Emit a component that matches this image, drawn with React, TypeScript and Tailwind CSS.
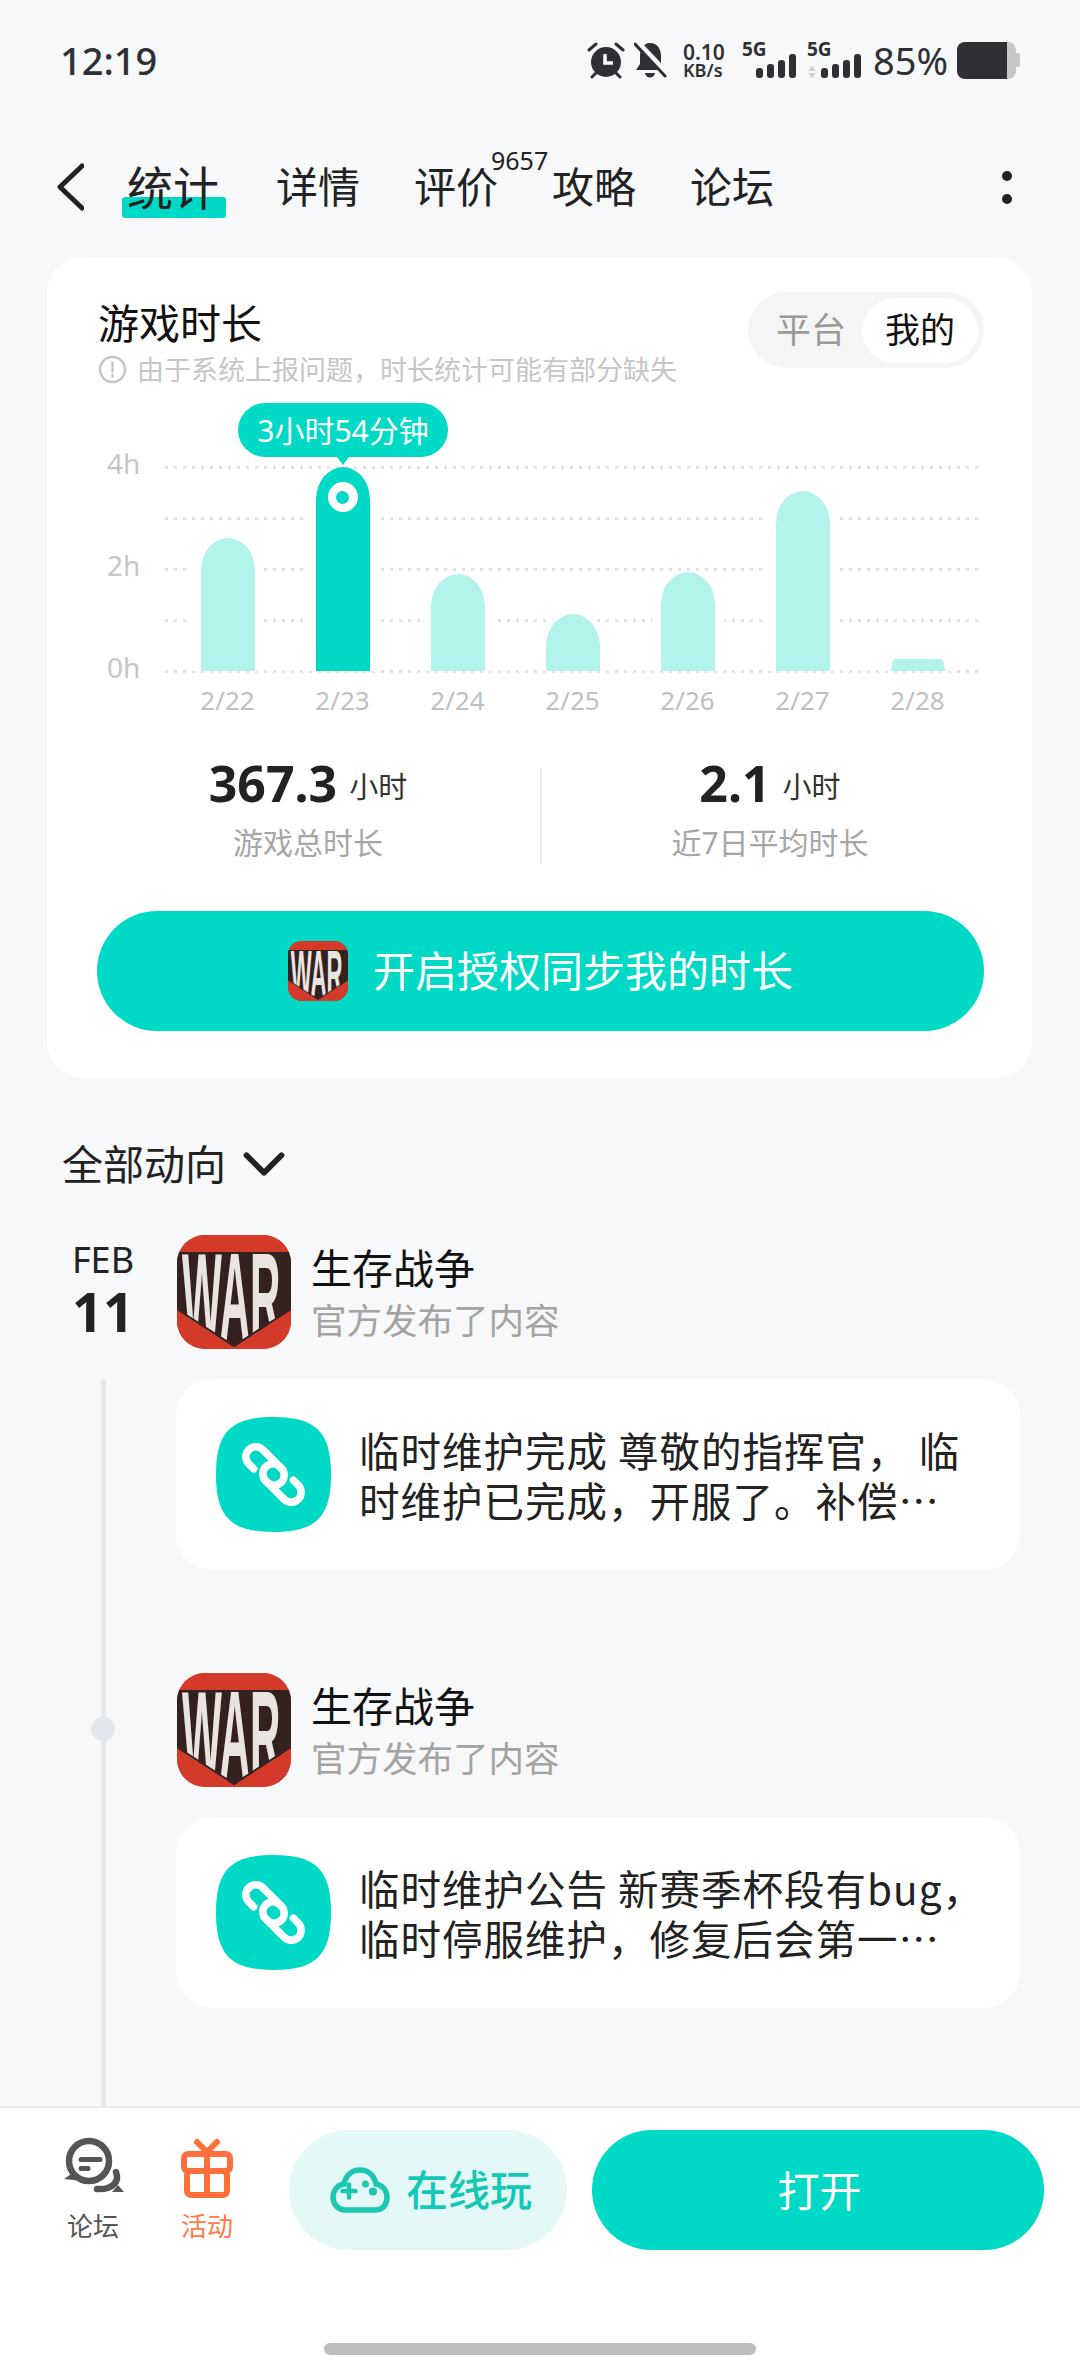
import { ChevronDown } from "lucide-react";

const bars = [
  { label: "2/22", height: 133 },
  { label: "2/23", height: 204, active: true },
  { label: "2/24", height: 97 },
  { label: "2/25", height: 57 },
  { label: "2/26", height: 99 },
  { label: "2/27", height: 180 },
  { label: "2/28", height: 12 },
];

const tabs = ["详情", "评价", "攻略", "论坛"];

function WarLogo({ size, className }: { size: number; className: string }) {
  return (
    <svg width={size} height={size} viewBox="0 0 114 114" className={className}>
      <rect width="114" height="114" fill="#d33a2a" />
      <path d="M0 17H114V73L57 110L0 73Z" fill="#33211f" />
      <text
        transform="translate(5 105) scale(0.88 2.6)"
        fontSize="48"
        fontWeight="700"
        fontFamily="'Liberation Sans', sans-serif"
        fill="#e9e4e0"
      >
        WAR
      </text>
      <path d="M0 0H114V17H0ZM0 75L57 112L114 75V114H0Z" fill="#d33a2a" />
      <path d="M0 74L57 111L114 74" fill="none" stroke="#33211f" strokeWidth="2" />
    </svg>
  );
}

function LinkIcon() {
  return (
    <svg width="115" height="115" viewBox="0 0 115 115" className="shrink-0">
      <path
        d="M57.5 0C100 0 115 15 115 57.5C115 100 100 115 57.5 115C15 115 0 100 0 57.5C0 15 15 0 57.5 0Z"
        fill="#00d9c5"
      />
      <g fill="none" stroke="#fff" strokeWidth="7.5" strokeLinecap="round">
        <path
          transform="translate(49 49) rotate(45)"
          d="M-6 10H-13A10 10 0 0 1 -13 -10H13A10 10 0 0 1 13 10H9"
        />
        <path
          transform="translate(66 66) rotate(225)"
          d="M-6 10H-13A10 10 0 0 1 -13 -10H13A10 10 0 0 1 13 10H9"
        />
      </g>
    </svg>
  );
}

function SignalBlock({ arrows }: { arrows?: boolean }) {
  return (
    <div className="relative h-[38px] w-[54px]">
      <span className="absolute left-0 top-[-2px] text-[19px] font-bold leading-[20px] text-[#2f3034]">5G</span>
      <svg width="54" height="38" viewBox="0 0 54 38" className="absolute left-0 top-0">
        <g fill="#2f3034">
          <rect x="14" y="27" width="7" height="10" rx="3" />
          <rect x="25" y="23" width="7" height="14" rx="3" />
          <rect x="36" y="19" width="7" height="18" rx="3" />
          <rect x="47" y="13" width="7" height="24" rx="3" />
        </g>
        {arrows && (
          <g fill="#cfcfcf">
            <path d="M1 30L5 25L9 30Z" />
            <path d="M1 32L5 37L9 32Z" />
          </g>
        )}
      </svg>
    </div>
  );
}

function StatusBar() {
  return (
    <div className="flex h-[120px] items-center justify-between pl-[60px] pr-[60px] text-[#2f3034]">
      <span className="text-[38px] font-medium leading-none">12:19</span>
      <div className="flex items-center">
        <svg width="38" height="38" viewBox="0 0 38 38">
          <circle cx="19" cy="21" r="15" fill="#2f3034" />
          <path d="M18 13V22H26" fill="none" stroke="#fff" strokeWidth="3.5" />
          <path
            d="M2 9L9 3M36 9L29 3M5 36L10 31M33 36L28 31"
            stroke="#2f3034"
            strokeWidth="3"
            strokeLinecap="round"
          />
        </svg>
        <svg width="33" height="38" viewBox="0 0 33 38" className="ml-[9px]">
          <path
            d="M16 2C24 2 27 9 27 15V23L31 29H2L6 23V15C6 9 9 2 16 2Z"
            fill="#2f3034"
          />
          <path d="M11 32H21C20 38 12 38 11 32Z" fill="#2f3034" />
          <path d="M3 1L33 33" stroke="#f6f8fa" strokeWidth="6" />
          <path d="M1 3L31 35" stroke="#2f3034" strokeWidth="3" strokeLinecap="round" />
        </svg>
        <div className="ml-[16px] flex w-[44px] flex-col text-[21px] font-semibold leading-[20px]">
          <span>0.10</span>
          <span className="text-[18px] leading-[17px]">KB/s</span>
        </div>
        <div className="ml-[15px]">
          <SignalBlock />
        </div>
        <div className="ml-[11px]">
          <SignalBlock arrows />
        </div>
        <span className="ml-[12px] text-[38px] leading-none">85%</span>
        <div className="ml-[9px] flex items-center">
          <div className="flex h-[37px] w-[59px] overflow-hidden rounded-[8px] bg-[#c8c8c8]">
            <div className="h-full w-[50px] bg-[#2f3034]" />
          </div>
          <div className="h-[14px] w-[4px] rounded-r-[2px] bg-[#c8c8c8]" />
        </div>
      </div>
    </div>
  );
}

function TabBar() {
  return (
    <div className="mb-[3px] flex h-[134px] items-center pl-[56px] pr-[68px] text-[#222]">
      <svg width="28" height="48" viewBox="0 0 28 48" className="shrink-0">
        <path d="M26 3L4 24L26 45" fill="none" stroke="#222" strokeWidth="5" strokeLinecap="round" strokeLinejoin="round" />
      </svg>
      <div className="relative ml-[43px] mr-[57px] text-[46px] leading-[50px]">
        <div className="absolute bottom-[-6px] left-[-5px] h-[21px] w-[104px] rounded-[3px] bg-[#00d9c5]" />
        <span className="relative">统计</span>
      </div>
      <div className="flex flex-1 items-center gap-[54px] text-[42px] leading-[50px]">
        {tabs.map((tab) => (
          <div key={tab} className="relative">
            {tab}
            {tab === "评价" && (
              <span className="absolute left-[77px] top-[-16px] text-[25px] leading-[28px]">9657</span>
            )}
          </div>
        ))}
      </div>
      <div className="flex flex-col gap-[13px]">
        <div className="h-[10px] w-[10px] rounded-full bg-[#222]" />
        <div className="h-[10px] w-[10px] rounded-full bg-[#222]" />
      </div>
    </div>
  );
}

function Chart() {
  return (
    <div className="relative mt-[19px] h-[312px]">
      {/* dotted grid + y labels sit behind the bars */}
      <div className="absolute left-[9px] right-[2px] top-[63px] flex h-[207px] flex-col justify-between">
        {["4h", "", "2h", "", "0h"].map((label, i) => (
          <div key={i} className="flex h-[3px] items-center">
            <span className="w-[55px] shrink-0 -translate-y-[5px] text-[28px] leading-none text-[#c6c6c6]">{label}</span>
            <div className="h-[3px] flex-1 bg-[radial-gradient(circle,#e2e2e2_1.5px,transparent_1.5px)] bg-[length:9px_3px]" />
          </div>
        ))}
      </div>
      <div className="absolute left-[72px] top-0 flex">
        {bars.map((bar) => (
          <div key={bar.label} className="flex w-[115px] flex-col items-center">
            <div className="flex h-[268px] items-end">
              <div
                className={`relative box-content w-[54px] rounded-tl-[36px_32px] rounded-tr-[36px_32px] border-x-[9px] border-white bg-clip-padding ${
                  bar.active ? "bg-[#00d9c5]" : "bg-[#b2f3eb]"
                }`}
                style={{ height: bar.height }}
              >
                {bar.active && (
                  <div className="absolute left-[12px] top-[15px] flex h-[30px] w-[30px] items-center justify-center rounded-full bg-white">
                    <div className="h-[13px] w-[13px] rounded-full bg-[#00d9c5]" />
                  </div>
                )}
              </div>
            </div>
            <span className="mt-[14px] text-[26px] leading-[30px] text-[#c0c0c0]">{bar.label}</span>
          </div>
        ))}
      </div>
      <div className="absolute left-[140px] top-0 flex h-[54px] w-[210px] items-center justify-center rounded-[27px] bg-[#00d9c5] text-[30px] text-white">
        3小时54分钟
        <div className="absolute bottom-[-8px] left-[99px] h-0 w-0 border-x-[6px] border-t-[8px] border-x-transparent border-t-[#00d9c5]" />
      </div>
    </div>
  );
}

function Stat({ value, label, width }: { value: string; label: string; width: string }) {
  return (
    <div className={`flex flex-col items-center ${width}`}>
      <div className="flex h-[50px] items-center">
        <span className="text-[50px] font-bold leading-[50px] text-[#222]">{value}</span>
        <span className="ml-[12px] mt-[6px] text-[29px] leading-none text-[#333]">小时</span>
      </div>
      <span className="mt-[15px] text-[30px] leading-[40px] text-[#a6a6a6]">{label}</span>
    </div>
  );
}

function PlayCard() {
  return (
    <div className="mx-[47px] h-[821px] w-[985px] rounded-[36px] bg-white pl-[51px] pr-[48px] pt-[35px]">
      <div className="flex items-start justify-between">
        <div className="pt-[7px]">
          <div className="text-[41px] leading-[48px] text-[#111]">游戏时长</div>
          <div className="mt-[7px] flex h-[30px] items-center text-[27px] leading-none text-[#c6c6c6]">
            <svg width="29" height="29" viewBox="0 0 29 29" className="mr-[10px]">
              <circle cx="14.5" cy="14.5" r="12.5" fill="none" stroke="#c6c6c6" strokeWidth="2.5" />
              <path d="M14.5 7.5V16.5M14.5 20V21.5" stroke="#c6c6c6" strokeWidth="2.5" strokeLinecap="round" />
            </svg>
            由于系统上报问题，时长统计可能有部分缺失
          </div>
        </div>
        <div className="flex h-[76px] w-[236px] items-center justify-between rounded-[38px] bg-[#f5f5f5] pl-[28px] pr-[6px] text-[35px]">
          <span className="text-[#999]">平台</span>
          <div className="flex h-[65px] w-[116px] items-center justify-center rounded-[33px] bg-white text-[#111]">
            我的
          </div>
        </div>
      </div>

      <Chart />

      <div className="mt-[43px] flex items-start">
        <Stat value="367.3" label="游戏总时长" width="w-[420px]" />
        <div className="ml-[22px] mt-[10px] h-[96px] w-[2px] bg-[#ebebeb]" />
        <Stat value="2.1" label="近7日平均时长" width="ml-[14px] w-[428px]" />
      </div>

      <div className="-ml-[1px] mt-[47px] flex h-[120px] w-[887px] items-center justify-center rounded-[60px] bg-[#00d9c5]">
        <WarLogo size={60} className="rounded-[14px]" />
        <span className="ml-[25px] text-[42px] leading-none text-white">开启授权同步我的时长</span>
      </div>
    </div>
  );
}

function FeedItem({ lines, date }: { lines: string[]; date?: boolean }) {
  return (
    <div>
      <div className="flex h-[114px]">
        <div className="ml-[29px] flex w-[148px] flex-col items-center pt-[5px]">
          {date && (
            <>
              <span className="text-[36px] leading-[40px] text-[#222]">FEB</span>
              <span className="mt-[3px] text-[54px] font-bold leading-[56px] text-[#222]">11</span>
            </>
          )}
        </div>
        <WarLogo size={114} className="shrink-0 rounded-[28px]" />
        <div className="ml-[20px] pt-[9px]">
          <div className="text-[41px] leading-[48px] text-[#111]">生存战争</div>
          <div className="mt-[6px] text-[35.500px] leading-[44px] text-[#a3a3a3]">官方发布了内容</div>
        </div>
      </div>
      <div className="ml-[176px] mt-[30px] flex h-[191px] w-[844px] items-center rounded-[36px] bg-white pl-[40px]">
        <LinkIcon />
        <div className="ml-[28px] whitespace-nowrap font-['Noto_Sans_CJK_SC',sans-serif] text-[40.500px] leading-[50px] tracking-[1px] text-[#222]">
          {lines.map((line) => (
            <div key={line}>{line}</div>
          ))}
        </div>
      </div>
    </div>
  );
}

function Feed() {
  return (
    <div className="relative mt-[47px] flex flex-1 flex-col gap-[103px]">
      <div className="absolute bottom-0 left-[101px] top-[144px] w-[5px] bg-[#e6e8ec]" />
      <div className="absolute left-[91px] top-[482px] h-[24px] w-[24px] rounded-full bg-[#e3e6ea]" />
      <FeedItem date lines={["临时维护完成 尊敬的指挥官， 临", "时维护已完成，开服了。补偿…"]} />
      <FeedItem lines={["临时维护公告 新赛季杯段有bug，", "临时停服维护，修复后会第一…"]} />
    </div>
  );
}

function BottomBar() {
  return (
    <div className="h-[270px] shrink-0 border-t-[2px] border-[#e8eaed] bg-white pt-[22px]">
      <div className="flex h-[120px] items-start">
        <div className="ml-[50px] flex w-[86px] flex-col items-center">
          <svg width="86" height="70" viewBox="0 0 86 70">
            <g fill="none" stroke="#555" strokeWidth="6.5" strokeLinecap="round">
              <circle cx="39" cy="31" r="20" />
              <path d="M66 42C70 52 62 60 47 59" />
            </g>
            <path d="M14 49L24 42L32 51Z" fill="#555" />
            <path d="M68 55L74 62L62 62Z" fill="#555" />
            <path d="M31 29.5H50M31 38.5H38" stroke="#555" strokeWidth="5" strokeLinecap="round" />
          </svg>
          <span className="mt-[11px] text-[26px] leading-[30px] text-[#555]">论坛</span>
        </div>
        <div className="flex w-[142px] flex-col items-center">
          <svg width="70" height="70" viewBox="0 0 70 70">
            <g fill="none" stroke="#ff6f3c" strokeWidth="6" strokeLinecap="round" strokeLinejoin="round">
              <rect x="12" y="24" width="46" height="17" rx="4" />
              <rect x="15" y="41" width="40" height="24" rx="4" />
              <path d="M35 24V65M25 12L35 22L45 12" />
            </g>
          </svg>
          <span className="mt-[11px] text-[26px] leading-[30px] text-[#ff7b45]">活动</span>
        </div>
        <div className="ml-[11px] flex h-[120px] w-[278px] items-center justify-center rounded-[60px] bg-[#e4f9f7] pl-[6px]">
          <svg width="60" height="52" viewBox="0 0 60 52">
            <path
              d="M15 46H45C53 46 57 40 57 33C57 26 52 21 46 20C44 11 38 6 30 6C22 6 16 11 14 20C7 21 3 27 3 33C3 40 8 46 15 46Z"
              fill="none"
              stroke="#1cc7b1"
              strokeWidth="5.5"
            />
            <path d="M12.5 27H25.5M19 20.5V33.5" stroke="#1cc7b1" strokeWidth="4.5" strokeLinecap="round" />
            <circle cx="35.5" cy="20" r="3.5" fill="#1cc7b1" />
            <circle cx="43" cy="27.500" r="4" fill="#1cc7b1" />
          </svg>
          <span className="ml-[16px] text-[42px] font-medium leading-none text-[#14c8b5]">在线玩</span>
        </div>
        <div className="ml-[25px] flex h-[120px] w-[452px] items-center justify-center rounded-[60px] bg-[#00d9c5] pl-[3px] text-[42px] text-white">
          打开
        </div>
      </div>
      <div className="mx-auto mt-[93px] h-[12px] w-[432px] rounded-[6px] bg-[#bdbdbd]" />
    </div>
  );
}

export default function App() {
  return (
    <div className="flex h-[2376px] w-[1080px] flex-col overflow-hidden bg-[#f6f8fa] font-['Noto_Sans','Noto_Sans_CJK_SC',sans-serif]">
      <div className="flex min-h-0 flex-1 flex-col overflow-hidden">
        <StatusBar />
        <TabBar />
        <PlayCard />
        <div className="ml-[62px] mt-[62px] flex h-[48px] items-center text-[41px] leading-[48px] text-[#222]">
          全部动向
          <ChevronDown size={70} strokeWidth={2} className="ml-[3px]" />
        </div>
        <Feed />
      </div>
      <BottomBar />
    </div>
  );
}
